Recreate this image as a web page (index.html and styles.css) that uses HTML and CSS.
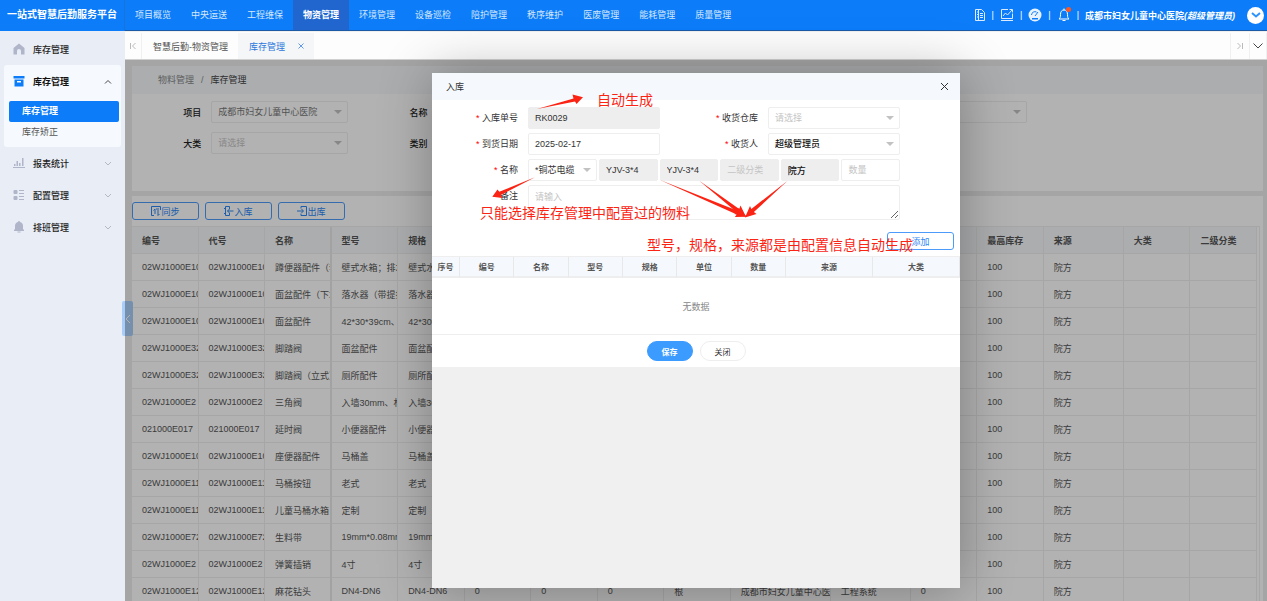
FILE: index.html
```html
<!DOCTYPE html>
<html lang="zh-CN">
<head>
    <meta charset="UTF-8">
    <meta name="viewport" content="width=device-width, initial-scale=1.0">
    <title>一站式智慧后勤服务平台</title>
    <link rel="stylesheet" href="styles.css">
</head>
<body>
<div class="app">
    <header class="topbar">
        <h1 class="logo">一站式智慧后勤服务平台</h1>
        <nav class="topnav">
            <a href="#">项目概览</a>
            <a href="#">中央运送</a>
            <a href="#">工程维保</a>
            <a href="#" class="active">物资管理</a>
            <a href="#">环境管理</a>
            <a href="#">设备巡检</a>
            <a href="#">陪护管理</a>
            <a href="#">秩序维护</a>
            <a href="#">医废管理</a>
            <a href="#">能耗管理</a>
            <a href="#">质量管理</a>
        </nav>
        <div class="tools">
            <a href="#" aria-label="文档"><svg width="12" height="14" viewBox="0 0 12 14" fill="none" stroke="#dcebff"><path d="M1.500 1.500h6l3 3v8h-9z"/><path d="M4.500 1.500v11M6 5.500h3M6 7.500h3M6 9.500h3M3 4h1M3 6.500h1M3 9h1"/></svg></a>
            <i>|</i>
            <a href="#" aria-label="统计"><svg width="14" height="14" viewBox="0 0 14 14" fill="none" stroke="#dcebff"><path d="M8 1.500H1.500v9h11V5.500"/><path d="M3 8l2.500-3 2 2L12 2M9.500 1.500h3v3M1 12.500h12"/></svg></a>
            <i>|</i>
            <a href="#" aria-label="仪表盘"><svg width="14" height="14" viewBox="0 0 14 14"><circle cx="7" cy="7" r="6.500" fill="#e8f2ff"/><path d="M3.500 7a3.500 3.500 0 0 1 5-3M7 8l3-4" fill="none" stroke="#0c7cf9"/><path d="M4 10h6v1.500H4z" fill="#0c7cf9"/></svg></a>
            <i>|</i>
            <a href="#" class="bell" aria-label="消息"><svg width="14" height="16" viewBox="0 0 14 16" fill="none" stroke="#fff"><path d="M7 3c-2.500 0-3.500 2-3.500 4.500 0 3-.5 3.500-1.500 4.500h10c-1-1-1.500-1.500-1.500-4.500C10.500 5 9.500 3 7 3zM5.500 13.500h3M7 1.500V3"/></svg><b></b></a>
            <i>|</i>
            <a href="#" class="user">成都市妇女儿童中心医院<em>(超级管理员)</em></a>
            <button class="user-menu" aria-label="用户菜单"><svg width="10" height="6" viewBox="0 0 10 6" fill="none" stroke="#2f93ff" stroke-width="2"><path d="M1 1l4 3.500L9 1"/></svg></button>
        </div>
    </header>

    <div class="body">
        <aside class="sidebar">
            <a href="#" class="menu-item"><svg width="12" height="12" viewBox="0 0 12 12" fill="#b0b5c9"><path d="M6 .5L11.500 5v6.500H8V8a2 2 0 0 0-4 0v3.500H.5V5z"/></svg><span>库存管理</span></a>
            <div class="menu-group">
                <a href="#" class="menu-item open"><svg width="12" height="12" viewBox="0 0 12 12" fill="#0c7cf9"><path d="M.5 1h11v2.500H.5zM1.500 4.500h9v7h-9z"/><path d="M4 6h4v1.500H4z" fill="#fff"/></svg><span>库存管理</span><svg class="arrow" width="8" height="5" viewBox="0 0 8 5" fill="none" stroke="#444"><path d="M1 4.500l3-3 3 3"/></svg></a>
                <a href="#" class="sub active">库存管理</a>
                <a href="#" class="sub">库存矫正</a>
            </div>
            <a href="#" class="menu-item"><svg width="12" height="12" viewBox="0 0 12 12" fill="#b0b5c9"><path d="M0 10h12v1H0zM1 7h1.500v2H1zM3.500 4H5v5H3.500zM6 6h1.500v3H6zM9 1h1.500v8H9z"/></svg><span>报表统计</span><svg class="arrow" width="8" height="5" viewBox="0 0 8 5" fill="none" stroke="#b4b8c4"><path d="M1 1l3 3 3-3"/></svg></a>
            <a href="#" class="menu-item"><svg width="12" height="12" viewBox="0 0 12 12" fill="#b0b5c9"><rect x=".5" y="1" width="4" height="4" rx="1"/><rect x=".5" y="7" width="4" height="4" rx="1"/><path d="M6 1h5v1H6zM6 4h5v1H6zM6 7h5v1H6zM6 10h5v1H6z"/></svg><span>配置管理</span><svg class="arrow" width="8" height="5" viewBox="0 0 8 5" fill="none" stroke="#b4b8c4"><path d="M1 1l3 3 3-3"/></svg></a>
            <a href="#" class="menu-item"><svg width="12" height="12" viewBox="0 0 12 12" fill="#b0b5c9"><path d="M6 0a1 1 0 0 1 1 1c2 .5 3 2 3 4v3l1 1v1H1V9l1-1V5c0-2 1-3.500 3-4a1 1 0 0 1 1-1zM4.500 10.500h3v1h-3z"/></svg><span>排班管理</span><svg class="arrow" width="8" height="5" viewBox="0 0 8 5" fill="none" stroke="#b4b8c4"><path d="M1 1l3 3 3-3"/></svg></a>
        </aside>

        <main class="main">
            <div class="tabs">
                <button class="tab-btn" aria-label="向左"><svg width="8" height="8" viewBox="0 0 8 8" fill="none" stroke="#bbb"><path d="M1.500 1v6M6.500 1l-3 3 3 3"/></svg></button>
                <a href="#" class="tab">智慧后勤-物资管理</a>
                <a href="#" class="tab current">库存管理<svg width="6" height="6" viewBox="0 0 6 6" stroke="#5f9ae6"><path d="M.5.5l5 5M5.500.5l-5 5"/></svg></a>
                <button class="tab-btn right" aria-label="向右"><svg width="8" height="8" viewBox="0 0 8 8" fill="none" stroke="#bbb"><path d="M1.500 1l3 3-3 3M6.500 1v6"/></svg></button>
                <button class="tab-btn" aria-label="更多"><svg width="10" height="6" viewBox="0 0 10 6" fill="none" stroke="#444"><path d="M.5.5L5 5 9.500.5"/></svg></button>
            </div>

            <div class="content">
                <section class="filter">
                    <div class="crumb"><a href="#">物料管理</a><i>/</i><span>库存管理</span></div>
                    <div class="filter-grid">
                        <label>项目<span class="select"><select><option>成都市妇女儿童中心医院</option></select></span></label>
                        <label>名称<input type="text"></label>
                        <label>型号<input type="text"></label>
                        <label>来源<span class="select"><select><option></option></select></span></label>
                        <label class="row2">大类<span class="select"><select class="empty"><option>请选择</option></select></span></label>
                        <label>类别<span class="select"><select class="empty"><option>请选择</option></select></span></label>
                    </div>
                </section>
                <section class="list">
                    <div class="actions">
                        <button class="btn"><svg width="10" height="10" viewBox="0 0 10 10" fill="none" stroke="#2a86f5"><path d="M3 9.500H.5v-9h9V4M4 3v5M2.500 4.500L4 3M7 4v5.500M8.500 8L7 9.500M5 3h3"/></svg>同步</button>
                        <button class="btn"><svg width="10" height="10" viewBox="0 0 10 10" fill="none" stroke="#2a86f5"><path d="M5.500 3V.5h-4v9h4V7M9.500 5h-6M5.500 3l-2 2 2 2M0 2.500h2M0 7.500h2"/></svg>入库</button>
                        <button class="btn"><svg width="10" height="10" viewBox="0 0 10 10" fill="none" stroke="#2a86f5"><path d="M4 2.500v-2h5.500v9H4v-2M0 5h6M4.500 3l2 2-2 2"/></svg>出库</button>
                    </div>
                    <div class="table-wrap">
                        <table class="stock">
                            <colgroup>
                                <col><col><col><col><col><col><col><col><col>
                                <col class="w100"><col class="w80"><col><col><col class="w80"><col><col>
                            </colgroup>
                            <thead>
                                <tr><th>编号</th><th>代号</th><th>名称</th><th>型号</th><th>规格</th><th>库存</th><th>占用</th><th>可用</th><th>单位</th><th>项目</th><th>类别</th><th>最低库存</th><th>最高库存</th><th>来源</th><th>大类</th><th>二级分类</th></tr>
                            </thead>
                            <tbody id="stock-body"></tbody>
                        </table>
                    </div>
                </section>
                <button class="fold" aria-label="收起菜单"><svg width="6" height="10" viewBox="0 0 6 10" fill="none" stroke="#fff"><path d="M5 1L1 5l4 4"/></svg></button>

                <div class="mask">
                    <div class="dialog" role="dialog" aria-label="入库">
                        <div class="dialog-head">
                            <span>入库</span>
                            <button aria-label="关闭窗口"><svg width="9" height="9" viewBox="0 0 9 9" stroke="#333"><path d="M1 1l7 7M8 1L1 8"/></svg></button>
                        </div>
                        <form class="dialog-body">
                            <div class="form-grid">
                                <label for="f-no" class="req">入库单号</label>
                                <input id="f-no" type="text" value="RK0029" readonly>
                                <label for="f-store" class="req">收货仓库</label>
                                <span class="select"><select id="f-store" class="empty"><option>请选择</option></select></span>
                                <label for="f-date" class="req">到货日期</label>
                                <input id="f-date" type="text" value="2025-02-17">
                                <label for="f-user" class="req">收货人</label>
                                <span class="select"><select id="f-user" class="strong"><option>超级管理员</option></select></span>
                                <label for="f-name" class="req">名称</label>
                                <div class="goods">
                                    <span class="select"><select id="f-name"><option>*铜芯电缆</option></select></span>
                                    <input type="text" value="YJV-3*4" aria-label="型号" readonly>
                                    <input type="text" value="YJV-3*4" aria-label="规格" readonly>
                                    <input type="text" placeholder="二级分类" aria-label="二级分类" readonly>
                                    <input type="text" value="院方" aria-label="来源" class="strong" readonly>
                                    <input type="text" placeholder="数量" aria-label="数量">
                                </div>
                                <label for="f-note">备注</label>
                                <textarea id="f-note" placeholder="请输入"></textarea>
                            </div>
                            <div class="add-row"><button type="button" class="btn">添加</button></div>
                            <table class="detail">
                                <colgroup>
                                    <col class="w28"><col><col><col><col><col><col><col class="w87"><col class="w87">
                                </colgroup>
                                <thead>
                                    <tr><th>序号</th><th>编号</th><th>名称</th><th>型号</th><th>规格</th><th>单位</th><th>数量</th><th>来源</th><th>大类</th></tr>
                                </thead>
                                <tbody>
                                    <tr><td colspan="9">无数据</td></tr>
                                </tbody>
                            </table>
                            <div class="dialog-foot">
                                <button type="button" class="save">保存</button>
                                <button type="button" class="close">关闭</button>
                            </div>
                        </form>

                        <svg class="marks" width="528" height="200" viewBox="0 0 528 200" fill="#fb2414">
                            <path d="M105 36L141.500 25.500 140.500 21.500 151 24.300 144.500 31 143 28.500z"/>
                            <path d="M103 104.300L68.700 122 70.500 125 60.300 123.700 65.500 116.500 67.300 118.700z"/>
                            <path d="M228 107L306.200 138 306.400 134.800 314.700 143.700 302.800 144 304.800 141.600z"/>
                            <path d="M267.300 107.700L307.200 136 308.500 132.500 314 143.700 302.300 141 304.800 139.200z"/>
                            <path d="M355.300 108L321.900 139 324.500 141 313 144.500 318 133 319.300 136z"/>
                        </svg>
                        <span class="note note-auto">自动生成</span>
                        <span class="note note-pick">只能选择库存管理中配置过的物料</span>
                        <span class="note note-config">型号，规格，来源都是由配置信息自动生成</span>
                    </div>
                </div>
            </div>
        </main>
    </div>
</div>

<script>
    var rows = [
        ['02WJ1000E101', '蹲便器配件（套）', '壁式水箱；排水'],
        ['02WJ1000E102', '面盆配件（下水）', '落水器（带提拉）'],
        ['02WJ1000E103', '面盆配件', '42*30*39cm、白'],
        ['02WJ1000E321', '脚踏阀', '面盆配件'],
        ['02WJ1000E322', '脚踏阀（立式）', '厕所配件'],
        ['02WJ1000E2', '三角阀', '入墙30mm、材质'],
        ['021000E017', '延时阀', '小便器配件'],
        ['02WJ1000E104', '座便器配件', '马桶盖'],
        ['02WJ1000E110', '马桶按钮', '老式'],
        ['02WJ1000E111', '儿童马桶水箱', '定制'],
        ['02WJ1000E721', '生料带', '19mm*0.08mm'],
        ['02WJ1000E2', '弹簧插销', '4寸'],
        ['02WJ1000E121', '麻花钻头', 'DN4-DN6']
    ];
    var html = '';
    rows.forEach(function (r) {
        var cells = [r[0], r[0], r[1], r[2], r[2], '0', '0', '0', '根', '成都市妇女儿童中心医院', '工程系统', '0', '100', '院方', '', ''];
        html += '<tr><td>' + cells.join('</td><td>') + '</td></tr>';
    });
    document.getElementById('stock-body').innerHTML = html;
</script>
</body>
</html>
```

FILE: styles.css
```css
* {
    box-sizing: border-box;
}
body {
    margin: 0;
    font-family: "Liberation Sans", "Noto Sans CJK SC", sans-serif;
    font-size: 9px;
    color: #333;
}
a {
    color: inherit;
    text-decoration: none;
}
i {
    font-style: normal;
}
button, input, select, textarea {
    font: inherit;
    color: inherit;
}
button {
    padding: 0;
    border: none;
    background: none;
    cursor: pointer;
}
svg {
    display: block;
    flex: none;
}
.app {
    display: flex;
    flex-direction: column;
    height: 100vh;
    overflow: hidden;
}

/* top bar */
.topbar {
    display: flex;
    height: 31px;
    flex: none;
    background: #0c7cf9;
    color: #fff;
}
.logo {
    width: 125px;
    margin: 0;
    font-size: 10px;
    line-height: 30px;
    text-align: center;
    font-weight: bold;
    border-right: 1px solid #1873dc;
}
.topnav {
    display: flex;
    flex: 1;
    border-bottom: 1px solid #1c5aa6;
}
.topnav a {
    padding: 0 10px;
    line-height: 30px;
    color: #d5e8ff;
}
.topnav .active {
    background: #2166cf;
    color: #fff;
    font-weight: bold;
}
.tools {
    display: flex;
    align-items: center;
    gap: 6px;
    padding-right: 3px;
    border-bottom: 1px solid #1c5aa6;
}
.bell {
    position: relative;
}
.bell b {
    position: absolute;
    top: 0;
    right: 0;
    width: 5px;
    height: 5px;
    border-radius: 50%;
    background: #ff5722;
}
.user {
    margin-right: 6px;
    font-weight: bold;
}
.user em {
    font-style: italic;
}
.user-menu {
    display: flex;
    align-items: center;
    justify-content: center;
    width: 17px;
    height: 17px;
    margin-left: -6px;
    border-radius: 50%;
    background: #fff;
}
.user + .user-menu {
    margin-left: 0;
}

.body {
    display: flex;
    flex: 1;
    min-height: 0;
}

/* sidebar */
.sidebar {
    width: 125px;
    flex: none;
    padding: 2px 4px;
    background: #e9edf6;
}
.menu-item {
    display: flex;
    align-items: center;
    gap: 8px;
    height: 32px;
    padding: 0 9px;
    color: #222;
    font-weight: 500;
}
.menu-item .arrow {
    margin-left: auto;
}
.menu-item.open {
    color: #111;
    font-weight: bold;
}
.menu-group {
    padding-bottom: 4px;
    border-radius: 3px;
    background: #f6fafe;
}
.sub {
    display: block;
    margin: 0 2px 0 5px;
    padding-left: 13px;
    line-height: 21px;
    border-radius: 2px;
    color: #555;
}
.menu-group .menu-item + .sub {
    margin-top: 4px;
}
.sub.active {
    background: #0c7cf9;
    color: #fff;
    font-weight: bold;
}

/* tab bar */
.main {
    display: flex;
    flex-direction: column;
    flex: 1;
    min-width: 0;
}
.tabs {
    display: flex;
    height: 29px;
    flex: none;
    padding-top: 1px;
    background: #fdfdfd;
    border-top: 1px solid #f0f0f0;
    border-bottom: 1px solid #d0d0d0;
}
.tab-btn {
    display: flex;
    align-items: center;
    justify-content: center;
    width: 17px;
    border-right: 1px solid #f0f0f0;
}
.tab-btn.right {
    width: 20px;
    margin-left: auto;
    border-left: 1px solid #f0f0f0;
}
.tab {
    display: flex;
    align-items: center;
    gap: 13px;
    padding: 0 10px 0 11px;
    color: #555;
}
.tab.current {
    background: #f5f6f7;
    color: #2a76dc;
}

/* page */
.content {
    position: relative;
    display: flex;
    flex-direction: column;
    flex: 1;
    min-height: 0;
    padding: 6px 4px 0 7px;
    background: #ededee;
}
.filter {
    min-height: 125px;
    margin-bottom: 5px;
    background: #fff;
}
.crumb {
    display: flex;
    gap: 7px;
    padding: 0 26px;
    line-height: 28px;
    background: #f5f8fb;
    color: #888;
}
.crumb span {
    color: #444;
}
.filter-grid {
    display: grid;
    grid-template-columns: repeat(5, 1fr);
    row-gap: 9px;
    padding-top: 7px;
}
.filter-grid label {
    display: flex;
    align-items: center;
    justify-content: flex-end;
    gap: 10px;
    padding-right: 10px;
    color: #222;
    font-weight: 500;
}
.filter-grid .row2 {
    grid-column: 1;
}
.filter-grid .select, .filter-grid input {
    width: 137px;
    color: #777;
    font-weight: normal;
}
input, select, textarea {
    width: 100%;
    height: 22px;
    padding: 0 6px;
    border: 1px solid #eee;
    border-radius: 2px;
    background: #fff;
    outline: none;
}
input[readonly] {
    background: #eee;
}
::placeholder {
    color: #c4c4c4;
}
select {
    appearance: none;
}
.select {
    position: relative;
    display: block;
}
.select::after {
    content: "";
    position: absolute;
    top: 9px;
    right: 6px;
    border: 4px solid transparent;
    border-top-color: #c2c2c2;
    border-bottom: none;
}
.empty {
    color: #c4c4c4;
}
.strong {
    color: #111;
    font-weight: 500;
}
.list {
    flex: 1;
    min-height: 0;
    overflow: hidden;
    padding-top: 6px;
    background: #fff;
}
.actions {
    display: flex;
    gap: 6px;
    margin-bottom: 6px;
}
.btn {
    display: flex;
    align-items: center;
    justify-content: center;
    width: 67px;
    height: 18px;
    border: 1px solid #4c9bfa;
    border-radius: 3px;
    color: #2a86f5;
    background: #fff;
}
.table-wrap {
    margin-right: 3px;
    padding-right: 2px;
    border-top: 1px solid #eee;
    border-right: 1px solid #eee;
}
table {
    width: 100%;
    table-layout: fixed;
    border-collapse: separate;
    border-spacing: 0;
}
.w100 { width: 100px; }
.w80 { width: 80px; }
.w28 { width: 28px; }
.w87 { width: 87px; }
.stock th, .stock td {
    height: 27px;
    padding: 0 0 0 10px;
    overflow: hidden;
    white-space: nowrap;
    text-align: left;
    border-right: 1px solid #eee;
    border-bottom: 1px solid #eee;
    color: #555;
}
.stock th {
    background: #f5f8fb;
}
.stock td:nth-child(3), .stock th:nth-child(3) {
    border-right: 2px solid #e8e8e8;
}
.fold {
    position: absolute;
    top: 241px;
    left: -3px;
    display: flex;
    align-items: center;
    justify-content: center;
    width: 11px;
    height: 35px;
    border-radius: 2px;
    background: #a9cdf8;
}

/* dialog */
.mask {
    position: absolute;
    inset: 0;
    display: flex;
    align-items: center;
    justify-content: center;
    background: rgba(0, 0, 0, 0.3);
}
.dialog {
    position: relative;
    width: 528px;
    height: calc(100% - 26px);
    background: #f0f0f0;
    box-shadow: 1px 1px 50px rgba(0, 0, 0, 0.3);
}
.dialog-head {
    display: flex;
    align-items: center;
    justify-content: space-between;
    height: 27px;
    padding: 0 11px 0 14px;
    background: #f5f9fd;
}
.dialog-body {
    padding-top: 7px;
    background: #fff;
}
.form-grid {
    display: grid;
    grid-template-columns: 86px 132px 88px 132px;
    gap: 4px 10px;
}
.form-grid label {
    line-height: 22px;
    text-align: right;
}
.req::before {
    content: "* ";
    color: #f00;
}
.goods, .form-grid textarea {
    grid-column: 2 / 5;
}
.goods {
    display: flex;
    gap: 2px;
}
.goods > * {
    flex: 1;
    min-width: 0;
}
.goods .select {
    flex: none;
    width: 69px;
}
.form-grid textarea {
    height: 35px;
    padding-top: 4px;
    resize: vertical;
}
.add-row {
    display: flex;
    justify-content: flex-end;
    padding: 12px 6px 6px;
}
.detail {
    border-top: 1px solid #eee;
}
.detail th {
    height: 21px;
    padding: 0;
    border-right: 1px solid #e8e8e8;
    border-bottom: 2px solid #eee;
    background: #f5f9fd;
    font-size: 8px;
    color: #555;
}
.detail td {
    height: 57px;
    padding: 0;
    text-align: center;
    border-bottom: 1px solid #eee;
    color: #888;
}
.dialog-foot {
    display: flex;
    justify-content: center;
    gap: 7px;
    padding: 6px 0;
}
.dialog-foot button {
    width: 46px;
    height: 20px;
    border: 1px solid #eee;
    border-radius: 10px;
    font-size: 8px;
}
.dialog-foot .save {
    border-color: #3c9bff;
    background: #3c9bff;
    color: #fff;
    font-weight: bold;
}

/* hints drawn over the dialog */
.marks {
    position: absolute;
    top: 0;
    left: 0;
    pointer-events: none;
}
.note {
    position: absolute;
    font-size: 14px;
    line-height: 20px;
    color: #fb2414;
    white-space: nowrap;
}
.note-auto {
    top: 17px;
    left: 165px;
}
.note-pick {
    top: 130px;
    left: 48px;
}
.note-config {
    top: 162px;
    left: 215px;
}
```
